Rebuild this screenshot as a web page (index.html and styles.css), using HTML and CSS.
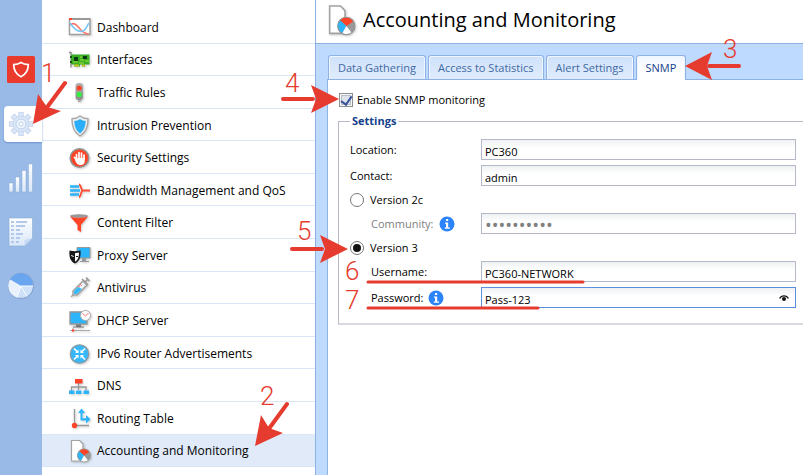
FILE: index.html
```html
<!DOCTYPE html>
<html lang="en">
<head>
<meta charset="utf-8">
<title>Accounting and Monitoring</title>
<link rel="stylesheet" href="styles.css">
</head>
<body>
<svg class="defs" aria-hidden="true">
  <defs>
    <linearGradient id="pale" x1="0" y1="0" x2="0" y2="1"><stop offset="0" stop-color="#fdfeff"/><stop offset="1" stop-color="#d9e7f8"/></linearGradient>
    <linearGradient id="metal" x1="0" y1="0" x2="0" y2="1"><stop offset="0" stop-color="#b4b4b4"/><stop offset="1" stop-color="#8c8c8c"/></linearGradient>
    <symbol id="report" viewBox="0 0 24 24">
      <path d="M3.500 1.500h8l3.500 3.500v17h-11.500z" fill="#fff" stroke="#a3a3a3" stroke-width="1.200"/>
      <circle cx="16" cy="16.500" r="6.500" fill="#999"/>
      <path d="M16 16.500L11 12A6.500 6.500 0 0 1 21.500 13z" fill="#ff4326"/>
      <path d="M16 16.500L11 12A6.500 6.500 0 0 0 13 22z" fill="#2cb5fb"/>
      <path d="M16 16.500L13 22A6.500 6.500 0 0 0 20 21.500z" fill="#fff"/>
      <circle cx="16" cy="16.500" r="6.500" fill="none" stroke="#929292" stroke-width=".8"/>
    </symbol>
    <symbol id="info" viewBox="0 0 16 16">
      <circle cx="8" cy="8" r="7.500" fill="#2b84fb"/>
      <path d="M7 3h2.200v2H7zM6 6.500h3.200v5H11v1.200H5.800v-1.200H7V7.700H6z" fill="#fff"/>
    </symbol>
  </defs>
</svg>
<div class="app">
  <nav class="rail" aria-label="Sections">
    <a href="#home" class="rail-item" aria-label="Home">
      <svg width="28" height="28" viewBox="0 0 28 28"><rect width="28" height="27" rx="1.500" fill="#e93a2b"/><path d="M14 6.500c2.500 1.700 4.700 2 7.300 2.100 0 5.600-2.300 9.800-7.300 12.200-5-2.400-7.300-6.600-7.300-12.200 2.600-.1 4.800-.4 7.300-2.100z" fill="none" stroke="#fff" stroke-width="1.700"/></svg>
    </a>
    <a href="#configuration" class="rail-item active" aria-label="Configuration">
      <svg width="26" height="26" viewBox="0 0 26 26"><g fill="none" stroke="#d3e1f5"><path d="M13 1v24M1 13h24M4.500 4.500l17 17M21.500 4.500l-17 17" stroke="#c3d4ed" stroke-width="5.400"/><path d="M13 1.800v22.400M1.800 13h22.400M5.200 5.200l15.600 15.600M20.800 5.200L5.200 20.800" stroke="#dbe7f8" stroke-width="4"/><circle cx="13" cy="13" r="8" fill="#dbe7f8" stroke="#c3d4ed" stroke-width=".8"/><circle cx="13" cy="13" r="5" fill="#eef4fc" stroke="#bdd0eb"/><circle cx="13" cy="13" r="2" fill="#fff" stroke="#bdd0eb"/></g></svg>
    </a>
    <a href="#status" class="rail-item" aria-label="Status">
      <svg width="26" height="30" viewBox="0 0 26 30"><g fill="url(#pale)" stroke="#88a8d3" stroke-width=".5"><path d="M1 20h4v9H1z"/><path d="M7.500 14h4v15h-4z"/><path d="M14 7.500h4V29h-4z"/><path d="M20.500 1h4v28h-4z"/></g></svg>
    </a>
    <a href="#logs" class="rail-item" aria-label="Logs">
      <svg width="26" height="30" viewBox="0 0 26 30"><path d="M1 1h23.500v20l-8 8H1z" fill="url(#pale)" stroke="#8cabd6" stroke-width=".6"/><path d="M24.500 21l-8 8v-6z" fill="#c6d9f3"/><g stroke="#b2c9ea" stroke-width="2"><path d="M3 5h3M3 9h3M3 13h3M3 17h3M3 21h3M3 25h3M8 5h11M8 9h9M8 13h4M8 17h7M8 21h4M8 25h3"/></g></svg>
    </a>
    <a href="#statistics" class="rail-item" aria-label="Statistics">
      <svg width="28" height="28" viewBox="0 0 28 28"><circle cx="14" cy="14" r="12.500" fill="#cfe1f8" stroke="#86a6d4" stroke-width="1.300"/><path d="M14 14L3 7.500A12.300 12.300 0 0 1 26 14z" fill="#6aa5f0"/><path d="M14 14L3 7.500A12.300 12.300 0 0 0 10 25.500z" fill="#e8f1fc"/><path d="M14 14L20 24.500M14 14L10 25.500M14 14h12" stroke="#f6faff" fill="none"/></svg>
    </a>
  </nav>

  <nav class="menu" aria-label="Configuration">
    <a href="#dashboard"><svg viewBox="0 0 24 24"><path d="M1.500 3v15.500h20.500V3" fill="#fff" stroke="#a0a0a0" stroke-width="1.500"/><path d="M1 3h21.500" stroke="#999" stroke-width="2"/><path d="M1 3h3" stroke="#f43" stroke-width="2"/><path d="M2 9c5-4 8 2 11 5s5 4 8 4" fill="none" stroke="#ff7467" stroke-width="1.600"/><path d="M2 7c4 6 8 10 13 8 4-2 4-6 6-8" fill="none" stroke="#74c7f8" stroke-width="1.600"/></svg>Dashboard</a>
    <a href="#interfaces"><svg viewBox="0 0 24 24"><path d="M1 4.500h2v15" fill="none" stroke="#888" stroke-width="1.300"/><path d="M3 6.500h18.500v10H17v2h-3v-2h-2v2H6v-2H3z" fill="#37ad24"/><path d="M6 16.500h5v2H6zM14 16.500h3v2h-3z" fill="#c7c528"/><path d="M6 9h4v4H6zM15 8h4v3h-4z" fill="#0c3810"/><path d="M12 9h2M12 12h4M5 14h5M17 13h4M11 15h5" stroke="#a9df39"/><path d="M2 8h2v2H2zM2 13h2v2H2z" fill="#145312"/></svg>Interfaces</a>
    <a href="#traffic"><svg viewBox="0 0 24 24"><path d="M10 16h2.800v5H10z" fill="#aaa"/><rect x="7.500" y="2" width="7.500" height="17" rx="3" fill="url(#metal)"/><circle cx="11.200" cy="7" r="2.600" fill="#ff4329"/><circle cx="11.200" cy="13.500" r="2.600" fill="#2ff13c"/></svg>Traffic Rules</a>
    <a href="#intrusion"><svg viewBox="0 0 24 24"><path d="M12 2c2.600 2 5.100 2.700 8 2.700.3 8-2.200 13.600-8 17.300-5.800-3.700-8.300-9.300-8-17.300 2.900 0 5.400-.7 8-2.700z" fill="#eee" stroke="#a5a5a5" stroke-width="1.300"/><path d="M12 5c1.800 1.300 3.600 1.900 5.700 2-.1 5.500-1.700 9.500-5.700 12.400C8 16.500 6.400 12.500 6.300 7c2.100-.1 3.900-.7 5.700-2z" fill="#2caffb"/></svg>Intrusion Prevention</a>
    <a href="#security"><svg viewBox="0 0 24 24"><circle cx="11.500" cy="12" r="9.300" fill="#ff4528" stroke="#8f9694" stroke-width="1.500"/><path d="M8.500 13V8.500M11 12V6.500M13.500 12V7M16 13V9M8.500 14L6.500 11.500" stroke="#fff" stroke-width="1.700" stroke-linecap="round"/><path d="M7.700 12h9v3c0 3-2 4-4.500 4S8 17 7 14z" fill="#fff"/></svg>Security Settings</a>
    <a href="#bandwidth"><svg viewBox="0 0 24 24"><path d="M2 7.500h9M2 11.500h10M2 15.500h9" stroke="#2cb5fb" stroke-width="2.300"/><path d="M11 5.500c2 0 2 6 4 6h7M11 18c2 0 2-6.500 4-6.500" fill="none" stroke="#ff4b31" stroke-width="1.800"/></svg>Bandwidth Management and QoS</a>
    <a href="#content"><svg viewBox="0 0 24 24"><ellipse cx="11" cy="5" rx="9" ry="1.800" fill="#999"/><path d="M2 5.500c4 1.700 14 1.700 18 0l-7 8.500v7l-3.500-2v-5z" fill="#ff4528"/></svg>Content Filter</a>
    <a href="#proxy"><svg viewBox="0 0 24 24"><path d="M9 3.500h13v10.500H9z" fill="#2cb5fb" stroke="#999"/><path d="M14 14h4v3h3v1h-9v-1h2z" fill="#999"/><path d="M1.500 6.500c4 1 7 1 11 0 .5 7-1 11-5.500 13-4.500-2-6-6-5.500-13z" fill="#161616"/><path d="M7 9c1.700 0 3.200 0 4-.4 0 4.400-1 7.600-4 9.200z" fill="#fff"/><path d="M3.200 11.500l2.500 1" stroke="#fff"/><path d="M8 12.500h2" stroke="#111"/></svg>Proxy Server</a>
    <a href="#antivirus"><svg viewBox="0 0 24 24"><path d="M3 21l4-4" stroke="#aaa" stroke-width="1.500"/><path d="M5 15L15 5l4 4L9 19H5z" fill="#edf6fc" stroke="#a2a2a2" stroke-width="1.500"/><path d="M6 15l4-4 4 2-5 5H6z" fill="#37b9fa"/><path d="M14 3l6 6M17 6l3-3M18 1.500l3.500 3.500" stroke="#999" stroke-width="1.600"/><path d="M12 8l2 2M10 10l2 1" stroke="#ff6a55"/></svg>Antivirus</a>
    <a href="#dhcp"><svg viewBox="0 0 24 24"><path d="M2 3h17v12H2z" fill="#2cb5fb" stroke="#969696" stroke-width="1.300"/><path d="M8 15.500h5v2h3v1H5v-1h3z" fill="#777"/><path d="M2 21.500h20M5 18.500v3" stroke="#aaa" fill="none"/><circle cx="5" cy="21.500" r="1.200" fill="#f43"/><circle cx="17.500" cy="6.500" r="5" fill="#fff" stroke="#aaa"/><path d="M14.500 4.500l3 2.500 3-3" fill="none" stroke="#ff7565"/></svg>DHCP Server</a>
    <a href="#ipv6"><svg viewBox="0 0 24 24"><circle cx="11.500" cy="12" r="9.200" fill="#36b8fa" stroke="#8a9ba5" stroke-width="1.300"/><path d="M6 6.500l4 4M17 6.500l-4 4M6 17.500l4-4M17 17.500l-4-4" stroke="#fff" stroke-width="1.700"/><path d="M10.500 7.500V11H7zM12.500 7.500V11H16zM10.500 16.500V13H7zM12.500 16.500V13H16z" fill="#fff"/></svg>IPv6 Router Advertisements</a>
    <a href="#dns"><svg viewBox="0 0 24 24"><path d="M10.500 8v8M3.500 17v-4h14.500v4" fill="none" stroke="#999" stroke-width="1.300"/><path d="M7 5h7.500v4.500H7z" fill="#ff4329"/><path d="M1 16.500h5.500V20H1zM8 16.500h5.500V20H8zM15.500 16.500H21V20h-5.500z" fill="#2cb5fb"/></svg>DNS</a>
    <a href="#routing"><svg viewBox="0 0 24 24"><path d="M6.500 2v16.500H21" fill="none" stroke="#999" stroke-width="1.300"/><circle cx="6.500" cy="18.500" r="2.700" fill="#ff4329"/><path d="M12.500 13.500V5h2v6.200H19v2.300z" fill="#2cb5fb"/><path d="M10 6l3.500-4.500L17 6zM18 8l4.500 4.300-4.500 4.300z" fill="#2cb5fb"/></svg>Routing Table</a>
    <a href="#accounting" class="active" aria-current="page"><svg><use href="#report"/></svg>Accounting and Monitoring</a>
  </nav>

  <main class="content">
    <header class="page-head">
      <svg class="page-icon"><use href="#report"/></svg>
      <h1>Accounting and Monitoring</h1>
    </header>
    <div class="panel">
      <div class="tabs" role="tablist">
        <button type="button" role="tab">Data Gathering</button>
        <button type="button" role="tab">Access to Statistics</button>
        <button type="button" role="tab">Alert Settings</button>
        <button type="button" role="tab" class="selected" aria-selected="true">SNMP</button>
      </div>
      <form class="form">
        <label class="enable"><input type="checkbox" checked>Enable SNMP monitoring</label>
        <fieldset>
          <legend>Settings</legend>
          <div class="fields">
            <label for="location">Location:</label>
            <input type="text" id="location" value="PC360">
            <label for="contact">Contact:</label>
            <input type="text" id="contact" value="admin">
            <label class="choice"><input type="radio" name="version">Version 2c</label>
            <label class="nested muted" for="community">Community:<svg class="info"><use href="#info"/></svg></label>
            <input type="password" id="community" value="community1" disabled>
            <label class="choice"><input type="radio" name="version" checked>Version 3</label>
            <label class="nested" for="username">Username:</label>
            <input type="text" id="username" value="PC360-NETWORK">
            <label class="nested" for="password">Password:<svg class="info"><use href="#info"/></svg></label>
            <div class="reveal">
              <input type="text" id="password" class="focused" value="Pass-123">
              <button type="button" aria-label="Hide password"><svg width="10" height="8" viewBox="0 0 10 8"><path d="M.7 4.500C2.500 1 7.500 1 9.300 4.500" fill="none" stroke="#111" stroke-width="1.400"/><circle cx="5" cy="5" r="2" fill="#111"/></svg></button>
            </div>
          </div>
        </fieldset>
      </form>
    </div>
  </main>
</div>

<svg class="notes" width="803" height="475" viewBox="0 0 803 475">
  <g stroke="#e63c2f" stroke-width="4" stroke-linecap="round">
    <path d="M65 83L48 106M287 404L268 430M739 66h-30M283 99h30M292 249h30"/>
    <path d="M368 282H583M368 308H538" stroke-width="3"/>
  </g>
  <g fill="#e63c2f">
    <path d="M33 124L38 94L47 107L61 111zM255 446L261 415L269 428L283 433zM685 66L712 52L707 66L712 80zM339 99L311 85L316 99L311 113zM348 249L320 235L325 249L320 263z"/>
    <g class="digits">
      <text x="41" y="82">1</text><text x="260" y="405">2</text><text x="723" y="58">3</text><text x="285" y="92">4</text><text x="297" y="240">5</text><text x="345" y="280">6</text><text x="345" y="309">7</text>
    </g>
  </g>
</svg>
</body>
</html>
```
FILE: styles.css
```css
* { box-sizing: border-box; }

body {
  margin: 0;
  position: relative;
  overflow: hidden;
  background: #fff;
  color: #000;
  font: 11px/16px "Open Sans", "Noto Sans", sans-serif;
}

.defs {
  position: absolute;
  width: 0;
  height: 0;
}

.app {
  display: grid;
  grid-template-columns: 42px 273px 1fr;
  height: 100vh;
}

/* Icon rail */
.rail {
  padding-top: 43px;
  background: #99bae7;
}

.rail-item {
  display: flex;
  align-items: center;
  justify-content: center;
  height: 54px;
}

.rail-item.active {
  height: 36px;
  margin: 9px 0 9px 4px;
  padding-right: 4px;
  border-radius: 4px 0 0 4px;
  background: #fff;
  box-shadow: 0 1px 2px #6f93c8;
}

/* Section menu */
.menu {
  display: flex;
  flex-direction: column;
  padding: 11px 0 8px;
}

.menu a {
  flex: 1;
  display: flex;
  align-items: center;
  gap: 5px;
  padding: 2px 0 0 26px;
  border-bottom: 1px solid #d9e6f5;
  color: #000;
  font-size: 12px;
  text-decoration: none;
  white-space: nowrap;
}

.menu a.active { background: #e0eaf8; }

.menu svg {
  width: 24px;
  height: 24px;
  filter: drop-shadow(1px 1px 1px #0003);
}

/* Page */
.content {
  display: flex;
  flex-direction: column;
  min-width: 0;
  border-left: 1px solid #8db2e3;
}

.page-head {
  display: flex;
  align-items: center;
  gap: 6px;
  height: 44px;
  padding: 0 0 4px 9px;
  border-bottom: 1px solid #8db2e3;
}

.page-icon {
  width: 32px;
  height: 32px;
  filter: drop-shadow(1px 1px 1px #0003);
}

h1 {
  margin: 0;
  font-size: 20px;
  font-weight: 400;
  line-height: 28px;
}

.panel {
  flex: 1;
  display: flex;
  flex-direction: column;
  padding: 11px 0 0 11px;
  background: #bedaff;
}

.tabs {
  display: flex;
  gap: 2px;
  position: relative;
  padding-left: 1px;
}

.tabs button {
  height: 24px;
  padding: 0 9px;
  border: 1px solid #8db2e3;
  border-bottom: 0;
  border-radius: 3px 3px 0 0;
  background: linear-gradient(#cfe1fa, #e0ecfd);
  box-shadow: inset 1px 1px #f0f6ff, inset -1px 0 #f0f6ff;
  color: #416aa3;
  font: inherit;
}

.tabs .selected {
  height: 25px;
  margin-bottom: -1px;
  background: linear-gradient(#f0f6fe, #fff 60%);
  color: #15428b;
}

.form {
  flex: 1;
  padding: 12px 0 0 10px;
  border-top: 1px solid #8db2e3;
  border-left: 1px solid #8db2e3;
  background: #fff;
}

.enable,
.choice {
  display: flex;
  align-items: center;
}

.enable {
  gap: 4px;
  padding-left: 1px;
}

input[type="checkbox"],
input[type="radio"] {
  appearance: none;
  flex: none;
  display: grid;
  place-items: center;
  width: 14px;
  height: 14px;
  margin: 0;
  border: 1px solid #777;
  background: #fff;
}

input[type="checkbox"] {
  border-color: #8e8f8f;
  background: #dfe3ea;
  box-shadow: inset 0 0 0 1px #f8f8f8, inset 0 0 0 2px #b9bfc9;
}

input[type="checkbox"]:checked::before {
  content: "";
  width: 5px;
  height: 9px;
  margin-bottom: 2px;
  border: solid #3b539b;
  border-width: 0 2px 2px 0;
  transform: rotate(35deg);
}

input[type="radio"] { border-radius: 50%; }

input[type="radio"]:checked::before {
  content: "";
  width: 8px;
  height: 8px;
  border-radius: 50%;
  background: #111;
}

fieldset {
  min-width: 0;
  margin: 5px 0 0;
  padding: 10px 7px 15px 11px;
  border: 1px solid #b9b9c9;
  border-right: 0;
  border-bottom: 2px solid #d9d9e3;
}

legend {
  padding: 0 2px;
  color: #15428b;
  font-weight: 700;
}

.fields {
  display: grid;
  grid-template-columns: 131px 1fr;
  align-items: center;
  row-gap: 5px;
}

.choice {
  grid-column: 1 / -1;
  gap: 6px;
  height: 17px;
}

.nested {
  display: flex;
  align-items: center;
  gap: 5px;
  padding-left: 21px;
}

.muted { color: #808080; }

.info {
  width: 16px;
  height: 16px;
}

input[type="text"],
input[type="password"] {
  width: 100%;
  height: 21px;
  padding: 3px 3px 0;
  border: 1px solid #b5b8c8;
  outline: 0;
  background: linear-gradient(#eef1f3, #fff 8px);
  color: #000;
  font: inherit;
}

input[type="password"]:disabled {
  color: #808080;
  font-size: 18px;
}

.reveal {
  display: flex;
  position: relative;
}

.reveal .focused { border-color: #5a8fe0; }

.reveal button {
  position: absolute;
  top: 3px;
  right: 7px;
  display: flex;
  align-items: center;
  height: 16px;
  padding: 0;
  border: 0;
  background: none;
}

/* Step markers over the page */
.notes {
  position: absolute;
  top: 0;
  left: 0;
  pointer-events: none;
}

.digits {
  font-family: Roboto, sans-serif;
  font-size: 26px;
  font-weight: 300;
}
```
